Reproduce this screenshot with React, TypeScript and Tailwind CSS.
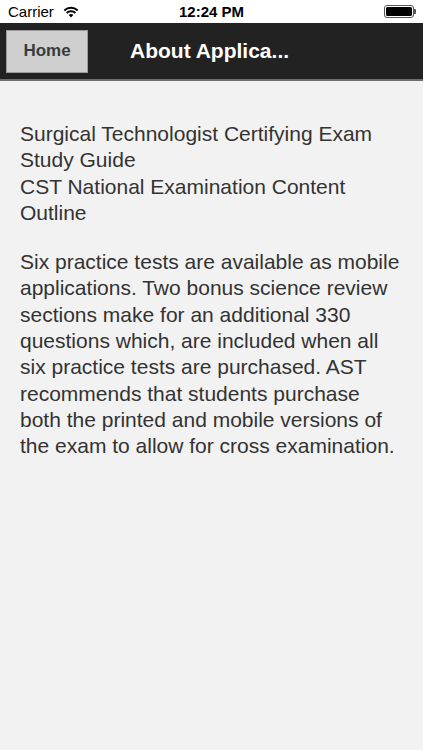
import React from "react";

function Wifi() {
  return (
    <svg width="16" height="12" viewBox="0 0 18 14" className="block">
      <path d="M9 13.5 L6.3 10.6 A4 4 0 0 1 11.7 10.6 Z" fill="#000" />
      <path d="M3.9 8.1 A7.4 7.4 0 0 1 14.1 8.1" stroke="#000" strokeWidth="2.2" fill="none" />
      <path d="M1.2 5.2 A11.3 11.3 0 0 1 16.8 5.2" stroke="#000" strokeWidth="2.2" fill="none" />
    </svg>
  );
}

function Battery() {
  return (
    <div className="flex items-center">
      <div className="w-[30px] h-[13px] rounded-[3px] border border-[#555] p-[1px]">
        <div className="w-full h-full bg-black rounded-[1.5px]" />
      </div>
      <div className="w-[2px] h-[5px] bg-[#555] rounded-r-[1px]" />
    </div>
  );
}

export default function App() {
  return (
    <div
      className="w-[423px] h-[750px] bg-[#f2f2f2] flex flex-col overflow-hidden"
      style={{ fontFamily: '"Liberation Sans", Arial, sans-serif' }}
    >
      <div className="h-[23px] bg-white flex items-center justify-between px-[8px] relative">
        <div className="flex items-center gap-[9px]">
          <span className="text-[15px] text-black leading-none">Carrier</span>
          <Wifi />
        </div>
        <span className="absolute left-0 right-0 text-center text-[15px] font-semibold text-black leading-none">
          12:24 PM
        </span>
        <div className="mr-[-1px]">
          <Battery />
        </div>
      </div>
      <div className="h-[58px] bg-[#222222] flex items-center pl-[6px] border-b-2 border-[#6e6e6e]">
        <div className="w-[82px] h-[43px] bg-[#cfcfcf] border border-[#9a9a9a] flex items-center justify-center">
          <span className="text-[17px] font-bold text-[#3a3a3a]">Home</span>
        </div>
        <span className="ml-[42px] text-[21px] font-bold text-white">About Applica...</span>
      </div>
      <div className="px-[20px] pt-[40px] text-[21px] leading-[26.3px] text-[#333333]">
        <p>
          Surgical Technologist Certifying Exam
          <br />
          Study Guide
          <br />
          CST National Examination Content
          <br />
          Outline
        </p>
        <p className="mt-[23px]">
          Six practice tests are available as mobile applications. Two bonus science review sections make for an additional 330 questions which, are included when all six practice tests are purchased. AST recommends that students purchase both the printed and mobile versions of the exam to allow for cross examination.
        </p>
      </div>
    </div>
  );
}
